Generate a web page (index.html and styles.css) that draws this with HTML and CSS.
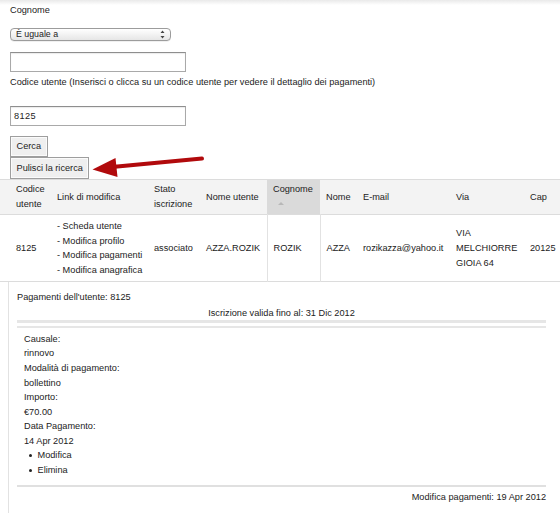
FILE: index.html
```html
<!DOCTYPE html>
<html lang="it">
<head>
<meta charset="utf-8">
<title>Ricerca utenti</title>
<link rel="stylesheet" href="styles.css">
</head>
<body>
<form class="search">
  <div class="label">Cognome</div>
  <div class="select">
    <span>È uguale a</span>
    <svg class="updown" width="5" height="9" viewBox="0 0 5 9"><path d="M2.5 0.5 L4.5 3 L0.5 3 Z M0.5 6 L4.5 6 L2.5 8.5 Z" fill="#444"/></svg>
  </div>
  <input class="field" type="text" value="">
  <div class="label l2">Codice utente (Inserisci o clicca su un codice utente per vedere il dettaglio dei pagamenti)</div>
  <input class="field f2" type="text" value="8125">
  <div class="buttons">
    <button type="button" class="btn">Cerca</button>
    <button type="button" class="btn">Pulisci la ricerca</button>
  </div>
</form>

<table class="results">
  <colgroup>
    <col class="c1"><col class="c2"><col class="c3"><col class="c4"><col class="c5"><col class="c6"><col class="c7"><col class="c8"><col class="c9">
  </colgroup>
  <thead>
    <tr>
      <th class="first">Codice<br>utente</th>
      <th>Link di modifica</th>
      <th>Stato<br>iscrizione</th>
      <th>Nome utente</th>
      <th class="sorted"><span>Cognome</span><span class="tri"></span></th>
      <th>Nome</th>
      <th>E-mail</th>
      <th>Via</th>
      <th>Cap</th>
    </tr>
  </thead>
  <tbody>
    <tr>
      <td class="first">8125</td>
      <td>
        <ul class="links">
          <li>- Scheda utente</li>
          <li>- Modifica profilo</li>
          <li>- Modifica pagamenti</li>
          <li>- Modifica anagrafica</li>
        </ul>
      </td>
      <td>associato</td>
      <td>AZZA.ROZIK</td>
      <td class="sortcol">ROZIK</td>
      <td>AZZA</td>
      <td>rozikazza@yahoo.it</td>
      <td>VIA<br>MELCHIORRE<br>GIOIA 64</td>
      <td>20125</td>
    </tr>
  </tbody>
</table>

<div class="payments">
  <div class="pline">Pagamenti dell'utente: 8125</div>
  <div class="valid">Iscrizione valida fino al: 31 Dic 2012</div>
  <div class="dbl"></div>
  <div class="entry">
    <div>Causale:</div>
    <div>rinnovo</div>
    <div>Modalità di pagamento:</div>
    <div>bollettino</div>
    <div>Importo:</div>
    <div>€70.00</div>
    <div>Data Pagamento:</div>
    <div>14 Apr 2012</div>
    <ul class="actions">
      <li>Modifica</li>
      <li>Elimina</li>
    </ul>
  </div>
  <div class="foot">Modifica pagamenti: 19 Apr 2012</div>
</div>

<svg class="arrow" width="560" height="513" viewBox="0 0 560 513">
  <line x1="112" y1="167" x2="202" y2="158.6" stroke="#b10a0c" stroke-width="4" stroke-linecap="round"/>
  <polygon points="92.5,169.5 115.5,158 117.5,177" fill="#b10a0c"/>
</svg>
</body>
</html>
```

FILE: styles.css
```css
html, body {
  margin: 0;
  padding: 0;
  overflow: hidden;
}
body {
  position: relative;
  width: 560px;
  height: 513px;
  font-family: "Liberation Sans", Arial, sans-serif;
  font-size: 9.2px;
  line-height: 14.6px;
  color: #222;
  background: linear-gradient(#e9e9e9 0, #ffffff 5px) no-repeat #fff;
}
.search {
  margin: 0;
  padding: 3px 0 0 10px;
}
.label {
  height: 15px;
}
.l2 {
  margin-top: 3px;
}
.select {
  margin-top: 10px;
  box-sizing: border-box;
  width: 161px;
  height: 13px;
  border: 1px solid #9c9c9c;
  border-radius: 4px;
  background: linear-gradient(#ffffff, #e6e6e6);
  box-shadow: 0 0.5px 0.5px rgba(0,0,0,0.12);
  display: flex;
  align-items: center;
  justify-content: space-between;
  padding: 0 5px 0 5px;
  line-height: 11px;
  font-size: 8.8px;
}
.updown {
  display: block;
}
.field {
  display: block;
  box-sizing: border-box;
  width: 176px;
  height: 20.5px;
  margin: 10.5px 0 0 0;
  padding: 0 3px;
  border: 1px solid #a9a9a9;
  border-top-color: #8e8e8e;
  box-shadow: inset 0 1px 1px rgba(0,0,0,0.08);
  font-family: "Liberation Sans", Arial, sans-serif;
  font-size: 9.2px;
  letter-spacing: 0.4px;
  color: #222;
  background: #fff;
  outline: none;
}
.f2 {
  margin-top: 15.5px;
}
.buttons {
  margin-top: 9.5px;
  display: flex;
  flex-direction: column;
  align-items: flex-start;
}
.btn {
  box-sizing: border-box;
  height: 21.6px;
  margin: 0;
  padding: 0 5.5px;
  border: 1px solid #9e9e9e;
  box-shadow: inset 0 0 0 1px #fbfbfb;
  background: #efefef;
  font-family: "Liberation Sans", Arial, sans-serif;
  font-size: 9.2px;
  color: #222;
  border-radius: 0;
}
.results {
  width: 560px;
  table-layout: fixed;
  border-collapse: collapse;
  margin-top: 0;
}
.c1 { width: 50px; }
.c2 { width: 98px; }
.c3 { width: 52px; }
.c4 { width: 67px; }
.c5 { width: 53px; }
.c6 { width: 37px; }
.c7 { width: 93px; }
.c8 { width: 74px; }
.c9 { width: 36px; }
.results thead tr {
  background: #f3f3f3;
  border-top: 1px solid #dcdcdc;
  border-bottom: 1px solid #dcdcdc;
}
.results th {
  font-weight: normal;
  text-align: left;
  vertical-align: middle;
  padding: 2.8px 2px 2.8px 6px;
  color: #222;
}
.results th.first, .results td.first {
  padding-left: 16px;
}
.results th:nth-child(2) {
  padding-left: 7px;
}
.results td:nth-child(2) {
  padding-left: 7px;
}
.results th.sorted {
  background: #dadada;
  vertical-align: top;
}
.sorted span {
  display: block;
}
.tri {
  width: 0;
  height: 0;
  margin: 5px 0 0 5px;
  border-left: 3.5px solid transparent;
  border-right: 3.5px solid transparent;
  border-bottom: 3.5px solid #b8b8b8;
}
.results tbody tr {
  border-bottom: 1px solid #dcdcdc;
}
.results td {
  padding: 3.6px 2px 3.6px 6px;
  vertical-align: middle;
  white-space: nowrap;
}
.results td.sortcol {
  border-left: 1px solid #e2e2e2;
  border-right: 1px solid #e2e2e2;
}
.links {
  list-style: none;
  margin: 0;
  padding: 0;
}
.payments {
  margin-left: 8px;
  border-left: 1px solid #e2e2e2;
  padding: 7.5px 14px 0 8px;
  height: 240px;
}
.valid {
  text-align: center;
  margin-top: 1.5px;
}
.dbl {
  height: 3px;
  border-top: 3px solid #e6e6e6;
  border-bottom: 2px solid #e6e6e6;
  margin-top: 0;
}
.entry {
  padding: 3.5px 0 7px 7px;
}
.actions {
  list-style: none;
  margin: 0;
  padding: 0 0 0 5px;
}
.actions li {
  position: relative;
  padding-left: 8.5px;
}
.actions li::before {
  content: "";
  position: absolute;
  left: 0;
  top: 6px;
  width: 3px;
  height: 3px;
  border-radius: 50%;
  background: #222;
}
.foot {
  border-top: 2px solid #e0e0e0;
  text-align: right;
  padding-top: 3px;
}
.arrow {
  position: absolute;
  left: 0;
  top: 0;
  pointer-events: none;
}
```
